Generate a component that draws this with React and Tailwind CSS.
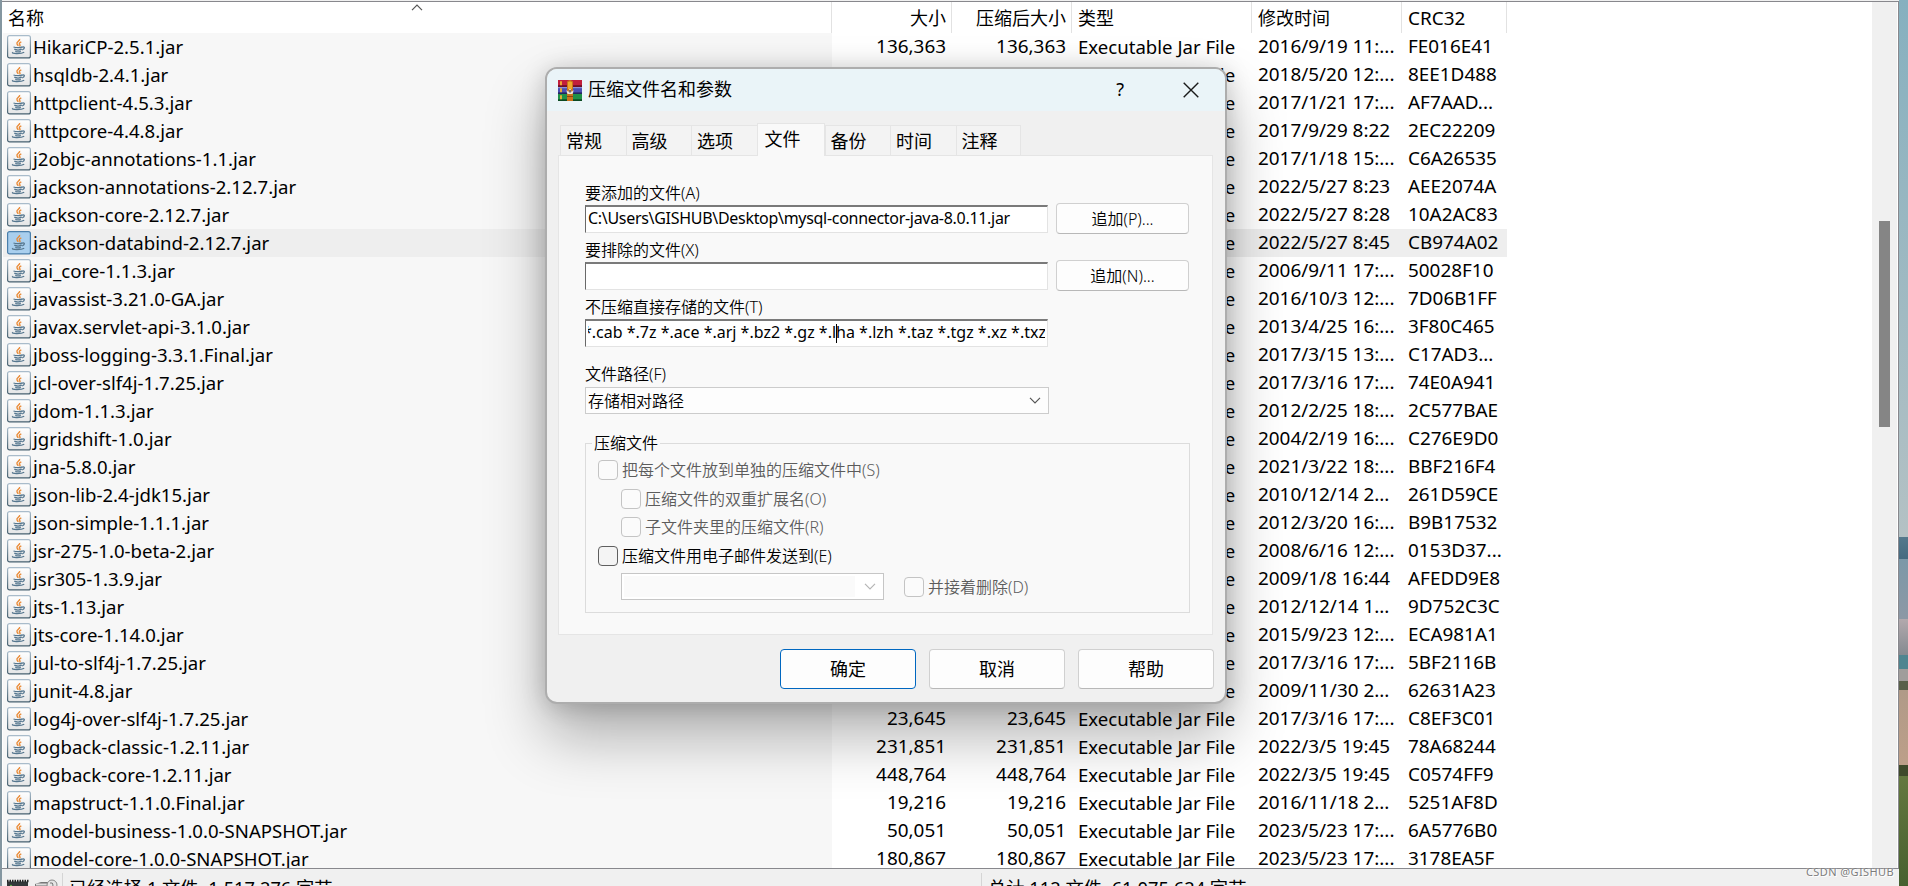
import React from "react";

const files = [
  ["HikariCP-2.5.1.jar", "136,363", "2016/9/19 11:...", "FE016E41"],
  ["hsqldb-2.4.1.jar", "1,558,137", "2018/5/20 12:...", "8EE1D488"],
  ["httpclient-4.5.3.jar", "", "2017/1/21 17:...", "AF7AAD..."],
  ["httpcore-4.4.8.jar", "", "2017/9/29 8:22", "2EC22209"],
  ["j2objc-annotations-1.1.jar", "", "2017/1/18 15:...", "C6A26535"],
  ["jackson-annotations-2.12.7.jar", "", "2022/5/27 8:23", "AEE2074A"],
  ["jackson-core-2.12.7.jar", "", "2022/5/27 8:28", "10A2AC83"],
  ["jackson-databind-2.12.7.jar", "", "2022/5/27 8:45", "CB974A02"],
  ["jai_core-1.1.3.jar", "", "2006/9/11 17:...", "50028F10"],
  ["javassist-3.21.0-GA.jar", "", "2016/10/3 12:...", "7D06B1FF"],
  ["javax.servlet-api-3.1.0.jar", "", "2013/4/25 16:...", "3F80C465"],
  ["jboss-logging-3.3.1.Final.jar", "", "2017/3/15 13:...", "C17AD3..."],
  ["jcl-over-slf4j-1.7.25.jar", "", "2017/3/16 17:...", "74E0A941"],
  ["jdom-1.1.3.jar", "", "2012/2/25 18:...", "2C577BAE"],
  ["jgridshift-1.0.jar", "", "2004/2/19 16:...", "C276E9D0"],
  ["jna-5.8.0.jar", "", "2021/3/22 18:...", "BBF216F4"],
  ["json-lib-2.4-jdk15.jar", "", "2010/12/14 2...", "261D59CE"],
  ["json-simple-1.1.1.jar", "", "2012/3/20 16:...", "B9B17532"],
  ["jsr-275-1.0-beta-2.jar", "", "2008/6/16 12:...", "0153D37..."],
  ["jsr305-1.3.9.jar", "", "2009/1/8 16:44", "AFEDD9E8"],
  ["jts-1.13.jar", "", "2012/12/14 1...", "9D752C3C"],
  ["jts-core-1.14.0.jar", "", "2015/9/23 12:...", "ECA981A1"],
  ["jul-to-slf4j-1.7.25.jar", "", "2017/3/16 17:...", "5BF2116B"],
  ["junit-4.8.jar", "", "2009/11/30 2...", "62631A23"],
  ["log4j-over-slf4j-1.7.25.jar", "23,645", "2017/3/16 17:...", "C8EF3C01"],
  ["logback-classic-1.2.11.jar", "231,851", "2022/3/5 19:45", "78A68244"],
  ["logback-core-1.2.11.jar", "448,764", "2022/3/5 19:45", "C0574FF9"],
  ["mapstruct-1.1.0.Final.jar", "19,216", "2016/11/18 2...", "5251AF8D"],
  ["model-business-1.0.0-SNAPSHOT.jar", "50,051", "2023/5/23 17:...", "6A5776B0"],
  ["model-core-1.0.0-SNAPSHOT.jar", "180,867", "2023/5/23 17:...", "3178EA5F"],
];

const SELECTED = 7;

function JarIcon({ selected }) {
  return (
    <svg width="24" height="24" viewBox="0 0 24 24" className="shrink-0">
      <defs>
        <linearGradient id="jarEdge" x1="0" y1="0" x2="0" y2="1">
          <stop offset="0" stopColor="#a9bccb" />
          <stop offset="1" stopColor="#46606f" />
        </linearGradient>
        <linearGradient id="jarFace" x1="0" y1="0" x2="0" y2="1">
          <stop offset="0" stopColor="#ffffff" />
          <stop offset="1" stopColor="#e4e5e6" />
        </linearGradient>
      </defs>
      <rect x="0.6" y="0.6" width="22.8" height="22.3" rx="2" fill={selected ? "#a9cfee" : "url(#jarFace)"} stroke={selected ? "#4a7fab" : "url(#jarEdge)"} strokeWidth="1.2" />
      <path d="M12.6 4c.8 1.8-3.6 3-2.6 5 .3.6 1 1.2 1.2 1.9M14.3 6.8c-1.8.8-2.5 1.6-1.5 2.8.5.6.2 1.2-.4 1.6" fill="none" stroke="#ea8a35" strokeWidth="1.4" />
      <path d="M6.5 12c2.5 1 7 .9 9-.1M7.3 14.2c2 .9 5.7.8 7.5 0M8.3 16.3c1.5.6 4 .6 5.5 0M15.6 12.1c2.2-.8 2.6 1.6-.4 2.9M5.8 17.3c-2.4 1.5 8.2 1.9 11.4 0" fill="none" stroke="#56778f" strokeWidth="1.3" />
    </svg>
  );
}

function RarIcon() {
  return (
    <svg width="24" height="21" viewBox="0 0 24 21" className="shrink-0">
      <rect width="24" height="7" fill="#c21f3c" />
      <rect y="5.2" width="24" height="1.8" fill="#6d1026" />
      <rect y="7" width="24" height="7" fill="#4a50b4" />
      <rect y="7" width="24" height="1.2" fill="#8d92d8" />
      <rect y="12.4" width="24" height="1.6" fill="#23265f" />
      <rect y="14" width="24" height="7" fill="#1f9148" />
      <rect y="19.3" width="24" height="1.7" fill="#0b4a22" />
      <path d="M3 1.2v4M3 8.2v4M3 15.2v4" stroke="#f2b632" strokeWidth="1.8" />
      <path d="M9 1.5q3-3 6 0V21H9z" fill="#c9731c" />
      <path d="M10 2.2q2-1.5 4 0V9h-4z" fill="#efa92c" />
      <path d="M8.6 10q0 4 1.6 4h3.6q1.6 0 1.6-4l-1.8 2-1-3h-1.2l-1 3z" fill="#e9e4dc" />
      <path d="M11.2 10h1.6v2.5h-1.6z" fill="#574f47" />
      <path d="M9 16.5h6" stroke="#8e4312" strokeWidth="1" />
    </svg>
  );
}

function Chevron({ color }) {
  return (
    <svg width="12" height="7" viewBox="0 0 12 7" fill="none" className="shrink-0">
      <path d="M1 .8 6 5.8 11 .8" stroke={color} strokeWidth="1.2" />
    </svg>
  );
}

function Row({ file, selected }) {
  const [name, size, time, crc] = file;
  return (
    <div className="flex h-7 shrink-0 items-center leading-[27px]">
      <div className={`flex h-7 w-[829px] items-center pl-[4px] ${selected ? "bg-[#eeeeee]" : "bg-[#f7f7f7]"}`}>
        <JarIcon selected={selected} />
        <span className="-mt-[2px] ml-[2px] text-[18.6px]">{name}</span>
      </div>
      <div className={`flex h-7 w-[675px] text-[18.9px] ${selected ? "bg-[#eeeeee]" : ""}`}>
        <span className="w-[114px] text-right">{size}</span>
        <span className="w-[120px] text-right">{size}</span>
        <span className="ml-[12px] w-[180px] text-[18.6px]">Executable Jar File</span>
        <span className="w-[150px]">{time}</span>
        <span>{crc}</span>
      </div>
    </div>
  );
}

function FileList() {
  return (
    <div className="flex h-[867px] flex-1 flex-col overflow-hidden border-t border-[#88888d] bg-white">
      <div className="relative flex h-[31px] shrink-0 leading-[33px]">
        <div className="w-[829px] border-r border-[#e2e2e2] pl-[5px]">名称</div>
        <div className="w-[120px] border-r border-[#e2e2e2] pr-[5px] text-right">大小</div>
        <div className="w-[120px] border-r border-[#e2e2e2] pr-[5px] text-right">压缩后大小</div>
        <div className="w-[180px] border-r border-[#e2e2e2] pl-[6px]">类型</div>
        <div className="w-[150px] border-r border-[#e2e2e2] pl-[6px]">修改时间</div>
        <div className="w-[105px] border-r border-[#e2e2e2] pl-[6px] text-[18.9px]">CRC32</div>
        <div className="absolute left-[408px] top-[2px] flex rotate-180">
          <Chevron color="#555" />
        </div>
      </div>
      {files.map((f, i) => (
        <Row key={f[0]} file={f} selected={i === SELECTED} />
      ))}
    </div>
  );
}

function Check({ label, disabled, className }) {
  return (
    <div className={`flex h-5 items-center ${className}`}>
      <span className={`size-5 shrink-0 rounded-[4px] border ${disabled ? "border-[#c4c4c4] bg-[#fbfbfb]" : "border-[#5f5f5f] bg-[#f4f4f4]"}`} />
      <span className={`ml-1 whitespace-nowrap ${disabled ? "text-[#5c5c5c]" : "text-black"}`}>{label}</span>
    </div>
  );
}

function Field({ label, button, children }) {
  return (
    <div className="h-[57px]">
      <div className="h-[23px] leading-[24px]">{label}</div>
      <div className="flex items-start">
        <div className="mt-[1px] h-7 w-[463px] border border-t-2 border-[#e3e3e3] border-l-[#696969] border-t-[#7a7a7a] bg-white px-[2px]">
          <div className="h-full overflow-hidden leading-[22px] whitespace-nowrap">{children}</div>
        </div>
        {button && (
          <button className="-mt-[1px] ml-2 h-[31px] w-[133px] rounded-[4px] border border-[#d0d0d0] border-b-[#b8b8b8] bg-[#fdfdfd]">{button}</button>
        )}
      </div>
    </div>
  );
}

function Tab({ children, active }) {
  if (active) {
    return (
      <div className="relative z-10 -mb-px h-[33px] w-[68px] border border-b-0 border-[#e5e5e5] bg-[#f9f9f9] pl-[7px] leading-[30px]">{children}</div>
    );
  }
  return <div className="h-[30px] w-[65.5px] border border-r-0 border-b-0 border-[#e5e5e5] bg-[#f3f3f3] pl-[5px] leading-[31px] last:w-[65px] last:border-r">{children}</div>;
}

function Dialog() {
  return (
    <div className="absolute left-[545px] top-[67px] flex h-[637px] w-[682px] flex-col overflow-hidden rounded-[12px] border-2 border-[#adadad] bg-[#f0f0f0] text-[18px] shadow-[0_32px_60px_rgba(0,0,0,0.3),0_2px_24px_rgba(0,0,0,0.18)]">
      <div className="flex h-[42px] shrink-0 items-center bg-[#eaf4f8] pl-[11px]">
        <RarIcon />
        <span className="-mt-px ml-[6px]">压缩文件名和参数</span>
        <span className="-mt-px mr-[59px] ml-auto">?</span>
        <svg width="16" height="16" viewBox="0 0 16 16" className="-mt-px mr-[26px]">
          <path d="M.7.7 15.3 15.3M15.3.7.7 15.3" stroke="#1a1a1a" strokeWidth="1.4" />
        </svg>
      </div>

      <div className="mt-[12px] flex h-[32px] shrink-0 items-end pl-[13px]">
        <Tab>常规</Tab>
        <Tab>高级</Tab>
        <Tab>选项</Tab>
        <Tab active>文件</Tab>
        <Tab>备份</Tab>
        <Tab>时间</Tab>
        <Tab>注释</Tab>
      </div>

      <div className="ml-[11px] h-[480px] w-[655px] shrink-0 border border-[#e5e5e5] bg-[#f9f9f9] pt-[25px] pl-[26px] text-[16px] font-[350]">
        <Field label="要添加的文件(A)" button="追加(P)...">
          <span className="font-normal tracking-[-0.3px]">C:\Users\GISHUB\Desktop\mysql-connector-java-8.0.11.jar</span>
        </Field>
        <Field label="要排除的文件(X)" button="追加(N)..." />
        <Field label="不压缩直接存储的文件(T)">
          <span className="relative -ml-[5px] font-normal">
            *.cab *.7z *.ace *.arj *.bz2 *.gz *.l
            <span className="-mr-px inline-block h-[19px] w-px bg-black align-middle" />
            ha *.lzh *.taz *.tgz *.xz *.txz
          </span>
        </Field>
        <div className="mt-[10px] h-[23px] leading-[24px]">文件路径(F)</div>
        <div className="mt-[2px] flex h-[27px] w-[464px] items-center justify-between border border-[#cccccc] bg-[#fdfdfd] pl-[2px] pr-[7px]">
          存储相对路径
          <Chevron color="#555" />
        </div>

        <fieldset className="mt-[17px] h-[182px] w-[605px] border border-[#dcdcdc] pl-[12px]">
          <legend className="-ml-[6px] px-[2px] leading-6">压缩文件</legend>
          <Check label="把每个文件放到单独的压缩文件中(S)" disabled className="mt-[5px]" />
          <Check label="压缩文件的双重扩展名(O)" disabled className="mt-[9px] ml-[23px]" />
          <Check label="子文件夹里的压缩文件(R)" disabled className="mt-[8px] ml-[23px]" />
          <Check label="压缩文件用电子邮件发送到(E)" className="mt-[9px]" />
          <div className="mt-[7px] ml-[23px] flex h-[27px] items-center">
            <div className="flex h-[27px] w-[263px] items-center justify-between border border-[#c6c6c6] bg-white py-[2px] pl-[2px] pr-[7px]">
              <div className="h-full w-[231px] bg-[#fafafa]" />
              <Chevron color="#b5b5b5" />
            </div>
            <Check label="并接着删除(D)" disabled className="ml-[20px]" />
          </div>
        </fieldset>
      </div>

      <div className="mt-[14px] mr-[11px] flex justify-end gap-[13px]">
        <button className="h-10 w-[136px] rounded-[4px] border border-[#0067c0] bg-[#fdfdfd]">确定</button>
        <button className="h-10 w-[136px] rounded-[4px] border border-[#d0d0d0] border-b-[#b8b8b8] bg-[#fdfdfd]">取消</button>
        <button className="h-10 w-[136px] rounded-[4px] border border-[#d0d0d0] border-b-[#b8b8b8] bg-[#fdfdfd]">帮助</button>
      </div>
    </div>
  );
}

function StatusBar() {
  return (
    <div className="flex h-[18px] shrink-0 overflow-hidden border-t border-[#88888d] bg-[#f0f0f0] text-[18.3px]">
      <div className="mt-[4px] flex w-[61px] shrink-0 items-start gap-1 border-r border-[#d5d5d5] pt-[6px] pl-[4px]">
        <svg width="24" height="9" viewBox="0 0 24 9">
          <path d="M1 2.5h21V9H1z" fill="#33383a" />
          <path d="M1 2h22" stroke="#222" strokeWidth="2.5" strokeDasharray="1.5 1" />
          <circle cx="5" cy="7" r="1.2" fill="#5fae4d" />
        </svg>
        <svg width="25" height="9" viewBox="0 0 25 9">
          <path d="M1 9V5l6-2h9v6z" fill="#777" />
          <path d="M2 5.5h11" stroke="#ddd" strokeWidth="2" />
          <circle cx="18" cy="6" r="5" fill="#e5e5e5" stroke="#888" />
          <path d="M16 4q3-1 3 2t-2 3" fill="none" stroke="#777" />
        </svg>
      </div>
      <div className="mt-[4px] w-[919px] shrink-0 border-r border-[#d5d5d5] pt-px pl-[6px] leading-7 whitespace-nowrap">已经选择 1 文件, 1,517,276 字节</div>
      <div className="mt-[4px] pt-px pl-[6px] leading-7 whitespace-nowrap">总计 112 文件, 61,075,624 字节</div>
    </div>
  );
}

export default function App() {
  return (
    <div className="relative flex h-[886px] w-[1908px] overflow-hidden bg-white font-['Noto_Sans','Noto_Sans_CJK_SC',sans-serif] text-[18px] text-black">
      <div className="flex w-[1899px] shrink-0 flex-col border-l-2 border-[#8496a0]">
        <div className="h-px shrink-0 bg-[#f0f0f0]" />
        <div className="flex h-[867px] shrink-0">
          <div className="w-px border-t border-[#88888d]" />
          <FileList />
          <div className="w-[25px] border-t border-[#88888d] bg-[#f0f0f0] pt-[219px] pl-[7px]">
            <div className="h-[206px] w-[11px] bg-[#858585]" />
          </div>
          <div className="w-[2px] border-t border-r border-[#88888d]" />
        </div>
        <StatusBar />
      </div>

      {/* Desktop wallpaper strip */}
      <div className="flex flex-1 flex-col">
        <div className="h-[537px] bg-gradient-to-b from-[#86b0bf] to-[#b4c1c4]" />
        <div className="h-[22px] bg-gradient-to-b from-[#54788c] to-[#456a80]" />
        <div className="h-[60px] bg-gradient-to-b from-[#7c98a8] to-[#8d98a5]" />
        <div className="h-[36px] bg-gradient-to-b from-[#b3a9ad] to-[#858a90]" />
        <div className="h-[14px] bg-[#4f8590]" />
        <div className="h-[12px] bg-[#a09d9b]" />
        <div className="h-[9px] bg-[#59604a]" />
        <div className="h-[75px] bg-gradient-to-b from-[#b09a88] to-[#bd9f89]" />
        <div className="h-[11px] bg-[#3f4a2b]" />
        <div className="flex-1 bg-gradient-to-b from-[#64783f] to-[#46602f]" />
      </div>

      <Dialog />

      <div className="absolute right-[14px] bottom-[6px] text-[11px] leading-[16px] tracking-[0.4px] text-[#7d7d7d] [text-shadow:0_0_2px_#fff,1px_1px_0_#fff]">CSDN @GISHUB</div>
    </div>
  );
}
